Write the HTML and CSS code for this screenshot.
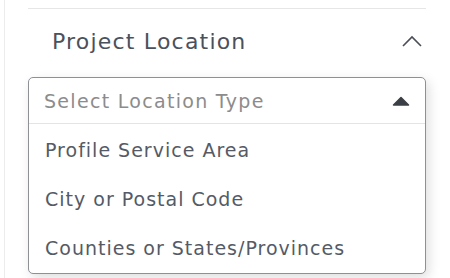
FILE: index.html
```html
<!DOCTYPE html>
<html lang="en">
<head>
  <meta charset="UTF-8">
  <title>Project Location</title>
  <link rel="stylesheet" href="styles.css">
</head>
<body>
  <div class="panel">
    <div class="section">
      <div class="section-head">
        <h2 class="section-title">Project Location</h2>
        <svg class="chevron" width="20" height="12" viewBox="0 0 20 12">
          <path d="M1 11 L10 2 L19 11" fill="none" stroke="#4a4f57" stroke-width="1.6"/>
        </svg>
      </div>
      <div class="select-wrap">
        <div class="select open">
          <div class="select-head">
            <span class="placeholder">Select Location Type</span>
            <svg class="caret" width="18" height="10" viewBox="0 0 18 10">
              <path d="M1.5 9 L9 1.5 L16.5 9 Z" fill="#3b3f45" stroke="#3b3f45" stroke-linejoin="round" stroke-width="1.5"/>
            </svg>
          </div>
          <ul class="options">
            <li>Profile Service Area</li>
            <li>City or Postal Code</li>
            <li>Counties or States/Provinces</li>
          </ul>
        </div>
      </div>
    </div>
    <div class="section">
      <div class="section-head">
        <h2 class="section-title">Project Timeline</h2>
        <svg class="chevron" width="20" height="12" viewBox="0 0 20 12">
          <path d="M1 1 L10 10 L19 1" fill="none" stroke="#4a4f57" stroke-width="1.6"/>
        </svg>
      </div>
    </div>
  </div>
</body>
</html>
```
FILE: styles.css
```css
body {
  margin: 0;
  background: #fff;
  font-family: "DejaVu Sans", "Open Sans", sans-serif;
}

.panel {
  margin-left: 4px;
  border-left: 1px solid #ececec;
  padding: 8px 23px 0 23px;
  width: 398px;
  height: 278px;
  box-sizing: content-box;
  overflow: hidden;
}

.section {
  border-top: 1px solid #e6e6e6;
}

.section-head {
  display: flex;
  justify-content: space-between;
  align-items: center;
  height: 64px;
  padding: 0 4px 0 24px;
}

.section-title {
  margin: 0;
  font-size: 22px;
  font-weight: 400;
  color: #4b515b;
  letter-spacing: 1.2px;
}

.select-wrap {
  position: relative;
  height: 178px;
  margin-top: 4px;
}

.select {
  position: absolute;
  top: 0;
  left: 0;
  right: 0;
  z-index: 2;
  background: #fff;
  border: 1px solid #8d9095;
  border-radius: 5px;
  box-shadow: 3px 4px 12px rgba(0, 0, 0, 0.13);
}

.select-head {
  display: flex;
  justify-content: space-between;
  align-items: center;
  height: 45px;
  padding: 0 15px 0 15px;
  border-bottom: 1px solid #e4e4e4;
}

.placeholder {
  font-size: 19px;
  letter-spacing: 1.3px;
  color: #8c8c8c;
}

.options {
  list-style: none;
  margin: 0;
  padding: 2px 0 0 0;
}

.options li {
  height: 49px;
  line-height: 49px;
  padding-left: 16px;
  font-size: 19px;
  letter-spacing: 1px;
  color: #545b66;
}
```
